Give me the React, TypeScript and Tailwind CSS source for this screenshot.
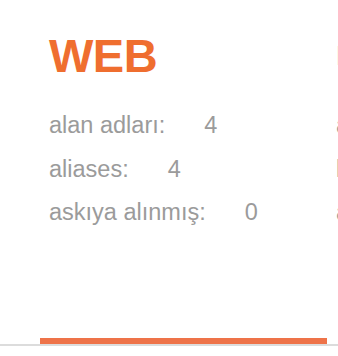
const webStats = [
  { label: "alan adları:", value: "4" },
  { label: "aliases:", value: "4" },
  { label: "askıya alınmış:", value: "0" }
];

const mailStats = [
  { label: "alan adları:", value: "0" },
  { label: "listeler:", value: "0" },
  { label: "askıya alınmış:", value: "0" }
];

function ServiceCard({
  title,
  titleClass,
  stats,
  active
}: {
  title: string;
  titleClass: string;
  stats: Array<{ label: string; value: string }>;
  active?: boolean;
}) {
  return (
    <div
      className={`flex h-[344px] w-[287px] shrink-0 flex-col pl-[9px] pt-[30px] ${
        active ? "border-b-[6px] border-[#ee7349]" : ""
      }`}
    >
      <h2 className={titleClass}>{title}</h2>
      <ul className="mt-[30px] flex flex-col gap-[17.5px] text-[23.5px] leading-[26px] text-[#9b9b9b]">
        {stats.map((row) => (
          <li className="flex gap-[39px]" key={row.label}>
            <span>{row.label}</span>
            <span>{row.value}</span>
          </li>
        ))}
      </ul>
    </div>
  );
}

export default function App() {
  return (
    <div className="h-[356px] w-[338px] overflow-hidden bg-white font-['Liberation_Sans',Arial,sans-serif]">
      <div className="flex border-b-2 border-[#dcdcdc] pl-[40px]">
        <ServiceCard
          title="WEB"
          active
          stats={webStats}
          titleClass="text-[47px] font-bold leading-[52px] tracking-[-0.5px] text-[#ef6e2f]"
        />
        <ServiceCard
          title="DNS"
          stats={mailStats}
          titleClass="text-[28px] leading-[52px] text-[#1d1d2b]"
        />
      </div>
    </div>
  );
}
